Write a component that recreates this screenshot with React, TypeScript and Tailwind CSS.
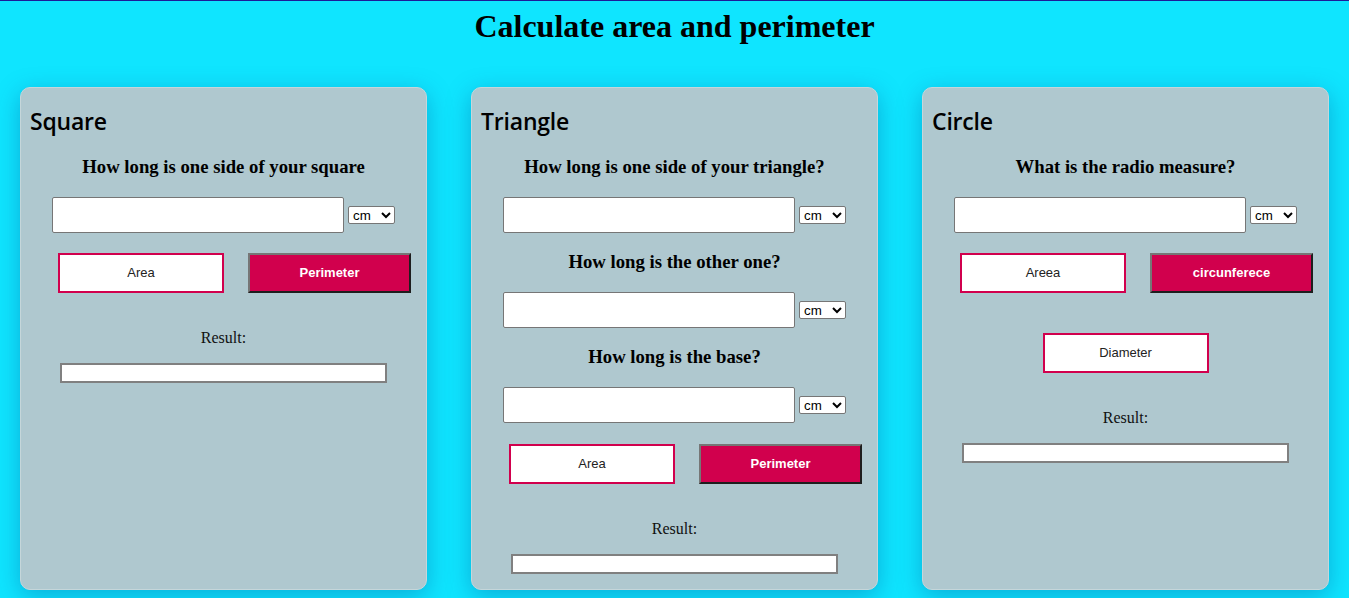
import React from "react";

const serif = "font-['Liberation_Serif','Times_New_Roman',serif]";
const sans = "font-['Liberation_Sans',Arial,sans-serif]";

const UnitRow: React.FC<{ className?: string }> = ({ className = "" }) => (
  <div className={`flex items-center justify-center gap-1 ${className}`}>
    <input type="text" className="h-9 w-[292px] rounded-[2px] border border-[#767676] bg-white" />
    <select
      defaultValue="cm"
      className={`h-[18px] w-[47px] rounded-[2px] border border-[#767676] bg-white text-[13.33px] text-black ${sans}`}
    >
      <option value="cm">cm</option>
      <option value="m">m</option>
      <option value="mm">mm</option>
    </select>
  </div>
);

const Question: React.FC<{ text: string; className?: string }> = ({ text, className = "" }) => (
  <h3 className={`text-center text-[18.72px] leading-[22px] font-bold text-black ${serif} ${className}`}>{text}</h3>
);

const LightBtn: React.FC<{ label: string; className?: string }> = ({ label, className = "" }) => (
  <button className={`h-10 w-[166px] border-2 border-[#d1004d] bg-white text-[13px] text-[#222] ${sans} ${className}`}>
    {label}
  </button>
);

const DarkBtn: React.FC<{ label: string }> = ({ label }) => (
  <button
    className={`h-10 w-[163px] border-2 border-t-[#767676] border-l-[#767676] border-r-[#1e1e1e] border-b-[#1e1e1e] bg-[#d1004d] text-[13px] font-bold text-white ${sans}`}
  >
    {label}
  </button>
);

const ButtonRow: React.FC<{ a: string; b: string; className?: string }> = ({ a, b, className = "" }) => (
  <div className={`flex gap-[24px] self-start pl-[37px] ${className}`}>
    <LightBtn label={a} />
    <DarkBtn label={b} />
  </div>
);

const Result: React.FC<{ className?: string }> = ({ className = "" }) => (
  <>
    <p className={`text-base leading-[18px] text-[#111] ${serif} ${className}`}>Result:</p>
    <div className="mt-[16px] h-5 w-[327px] border-2 border-[#808080] bg-white" />
  </>
);

const Card: React.FC<{ title: string; children: React.ReactNode }> = ({ title, children }) => (
  <div className="flex h-[503px] flex-col items-center rounded-[10px] border border-[#c5d6da] bg-[#afc8cf] pt-[19px] shadow-[0_6px_24px_rgba(0,70,140,0.35)]">
    <h2 className="self-start pl-[9px] text-[23px] leading-[28px] font-semibold tracking-[-0.2px] text-black font-['Open_Sans',sans-serif]">
      {title}
    </h2>
    {children}
  </div>
);

export default function App() {
  return (
    <div className="min-h-[598px] bg-[#0fe5ff]">
      <div className="h-px bg-[#1c1c9a]" />
      <h1 className={`mt-[7px] text-center text-[32px] leading-[37px] font-bold text-black ${serif}`}>
        Calculate area and perimeter
      </h1>
      <div className="mt-[42px] grid grid-cols-3 gap-[44px] px-5">
        <Card title="Square">
          <Question text="How long is one side of your square" className="mt-[21px]" />
          <UnitRow className="mt-[19px]" />
          <ButtonRow a="Area" b="Perimeter" className="mt-[20px]" />
          <Result className="mt-[36px]" />
        </Card>
        <Card title="Triangle">
          <Question text="How long is one side of your triangle?" className="mt-[21px]" />
          <UnitRow className="mt-[19px]" />
          <Question text="How long is the other one?" className="mt-[18px]" />
          <UnitRow className="mt-[19px]" />
          <Question text="How long is the base?" className="mt-[18px]" />
          <UnitRow className="mt-[19px]" />
          <ButtonRow a="Area" b="Perimeter" className="mt-[21px]" />
          <Result className="mt-[36px]" />
        </Card>
        <Card title="Circle">
          <Question text="What is the radio measure?" className="mt-[21px]" />
          <UnitRow className="mt-[19px]" />
          <ButtonRow a="Areea" b="circunferece" className="mt-[20px]" />
          <LightBtn label="Diameter" className="mt-[40px]" />
          <Result className="mt-[36px]" />
        </Card>
      </div>
    </div>
  );
}
